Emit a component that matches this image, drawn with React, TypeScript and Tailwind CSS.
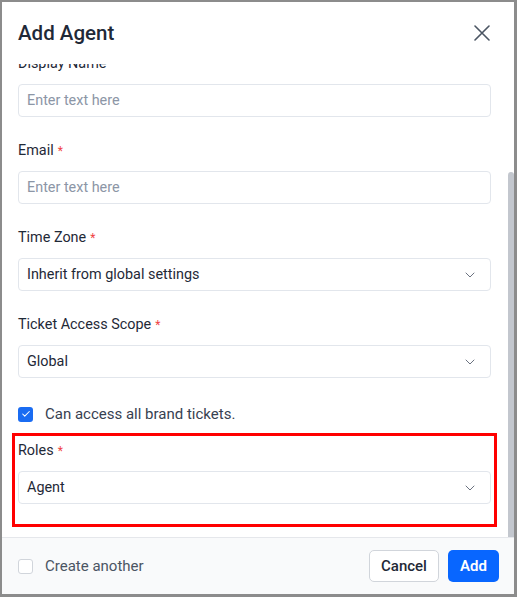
import React from 'react';
import { ChevronDown, Check } from 'lucide-react';

const Label = ({ text, required }: { text: string; required?: boolean }) => (
  <div className="flex h-5 items-center text-[14.4px] text-[#1f2937]">
    {text}
    {required && <span className="ml-1 text-[12px] text-[#ef4444]">*</span>}
  </div>
);

const TextField = ({ label, required }: { label: string; required?: boolean }) => (
  <div className="mb-6">
    <Label text={label} required={required} />
    <input
      className="mt-2.5 h-[33px] w-full rounded-[4px] border border-[#e2e6ec] px-2 text-[14.4px] text-[#1f2937] outline-none placeholder:text-[#8c96a6]"
      placeholder="Enter text here"
    />
  </div>
);

const SelectField = ({ label, value, required, last }: { label: string; value: string; required?: boolean; last?: boolean }) => (
  <div className={last ? '' : 'mb-6'}>
    <Label text={label} required={required} />
    <div className="mt-2.5 flex h-[33px] w-full items-center justify-between rounded-[4px] border border-[#e2e6ec] pl-2 pr-3 text-[14.4px] text-[#1f2937]">
      <span>{value}</span>
      <ChevronDown className="h-4 w-4 text-[#6b7280]" strokeWidth={1.5} />
    </div>
  </div>
);

export default function App() {
  return (
    <div className="flex h-[597px] w-[517px] flex-col border-b-[3px] border-l-2 border-r-[3px] border-t-2 border-[#8c8c8c] bg-white font-['Roboto',sans-serif]">
      <div className="flex h-[62px] shrink-0 items-center justify-between pl-4 pr-6">
        <h2 className="text-[20.5px] font-medium text-[#1f2937]">Add Agent</h2>
        <button className="text-[#4b5563]">
          <svg width="16" height="16" viewBox="0 0 16 16" fill="none" stroke="currentColor" strokeWidth="1.6" strokeLinecap="round">
            <path d="M1 1L15 15M15 1L1 15" />
          </svg>
        </button>
      </div>

      <div className="relative flex min-h-0 flex-1 flex-col justify-end overflow-hidden">
        <div className="shrink-0 pb-[33px] pl-4 pr-[23px] pt-6">
          <TextField label="Display Name" />
          <TextField label="Email" required />
          <SelectField label="Time Zone" value="Inherit from global settings" required />
          <SelectField label="Ticket Access Scope" value="Global" required />

          <label className="mb-[15px] flex h-6 items-center gap-3 text-[15px] text-[#374151]">
            <span className="flex h-[15px] w-[15px] items-center justify-center rounded-[3px] bg-[#1a6cf2]">
              <Check className="h-[10px] w-[10px] text-white" strokeWidth={2.5} />
            </span>
            Can access all brand tickets.
          </label>

          <div className="relative">
            <SelectField label="Roles" value="Agent" required last />
            <div className="pointer-events-none absolute -bottom-[23px] -left-[6px] -right-[6px] -top-[8px] border-[3.5px] border-[#ff0000]" />
          </div>
        </div>

        <div className="absolute bottom-0 right-0 top-[108px] w-[6px] rounded-t-[3px] bg-[#c3c7ce]" />
      </div>

      <div className="flex h-[57px] shrink-0 items-center justify-between border-t border-[#e5e7eb] bg-[#f9fafb] pl-4 pr-[15px]">
        <label className="flex items-center gap-3 text-[15px] text-[#4b5563]">
          <span className="h-[15px] w-[15px] rounded-[3px] border border-[#d1d5db] bg-white" />
          Create another
        </label>
        <div className="flex gap-[9px]">
          <button className="h-8 w-[70px] rounded-[5px] border border-[#d1d5db] bg-white text-[15px] font-medium text-[#1f2937]">
            Cancel
          </button>
          <button className="h-8 w-[51px] rounded-[5px] bg-[#0866ff] text-[15px] font-semibold text-white">
            Add
          </button>
        </div>
      </div>
    </div>
  );
}
